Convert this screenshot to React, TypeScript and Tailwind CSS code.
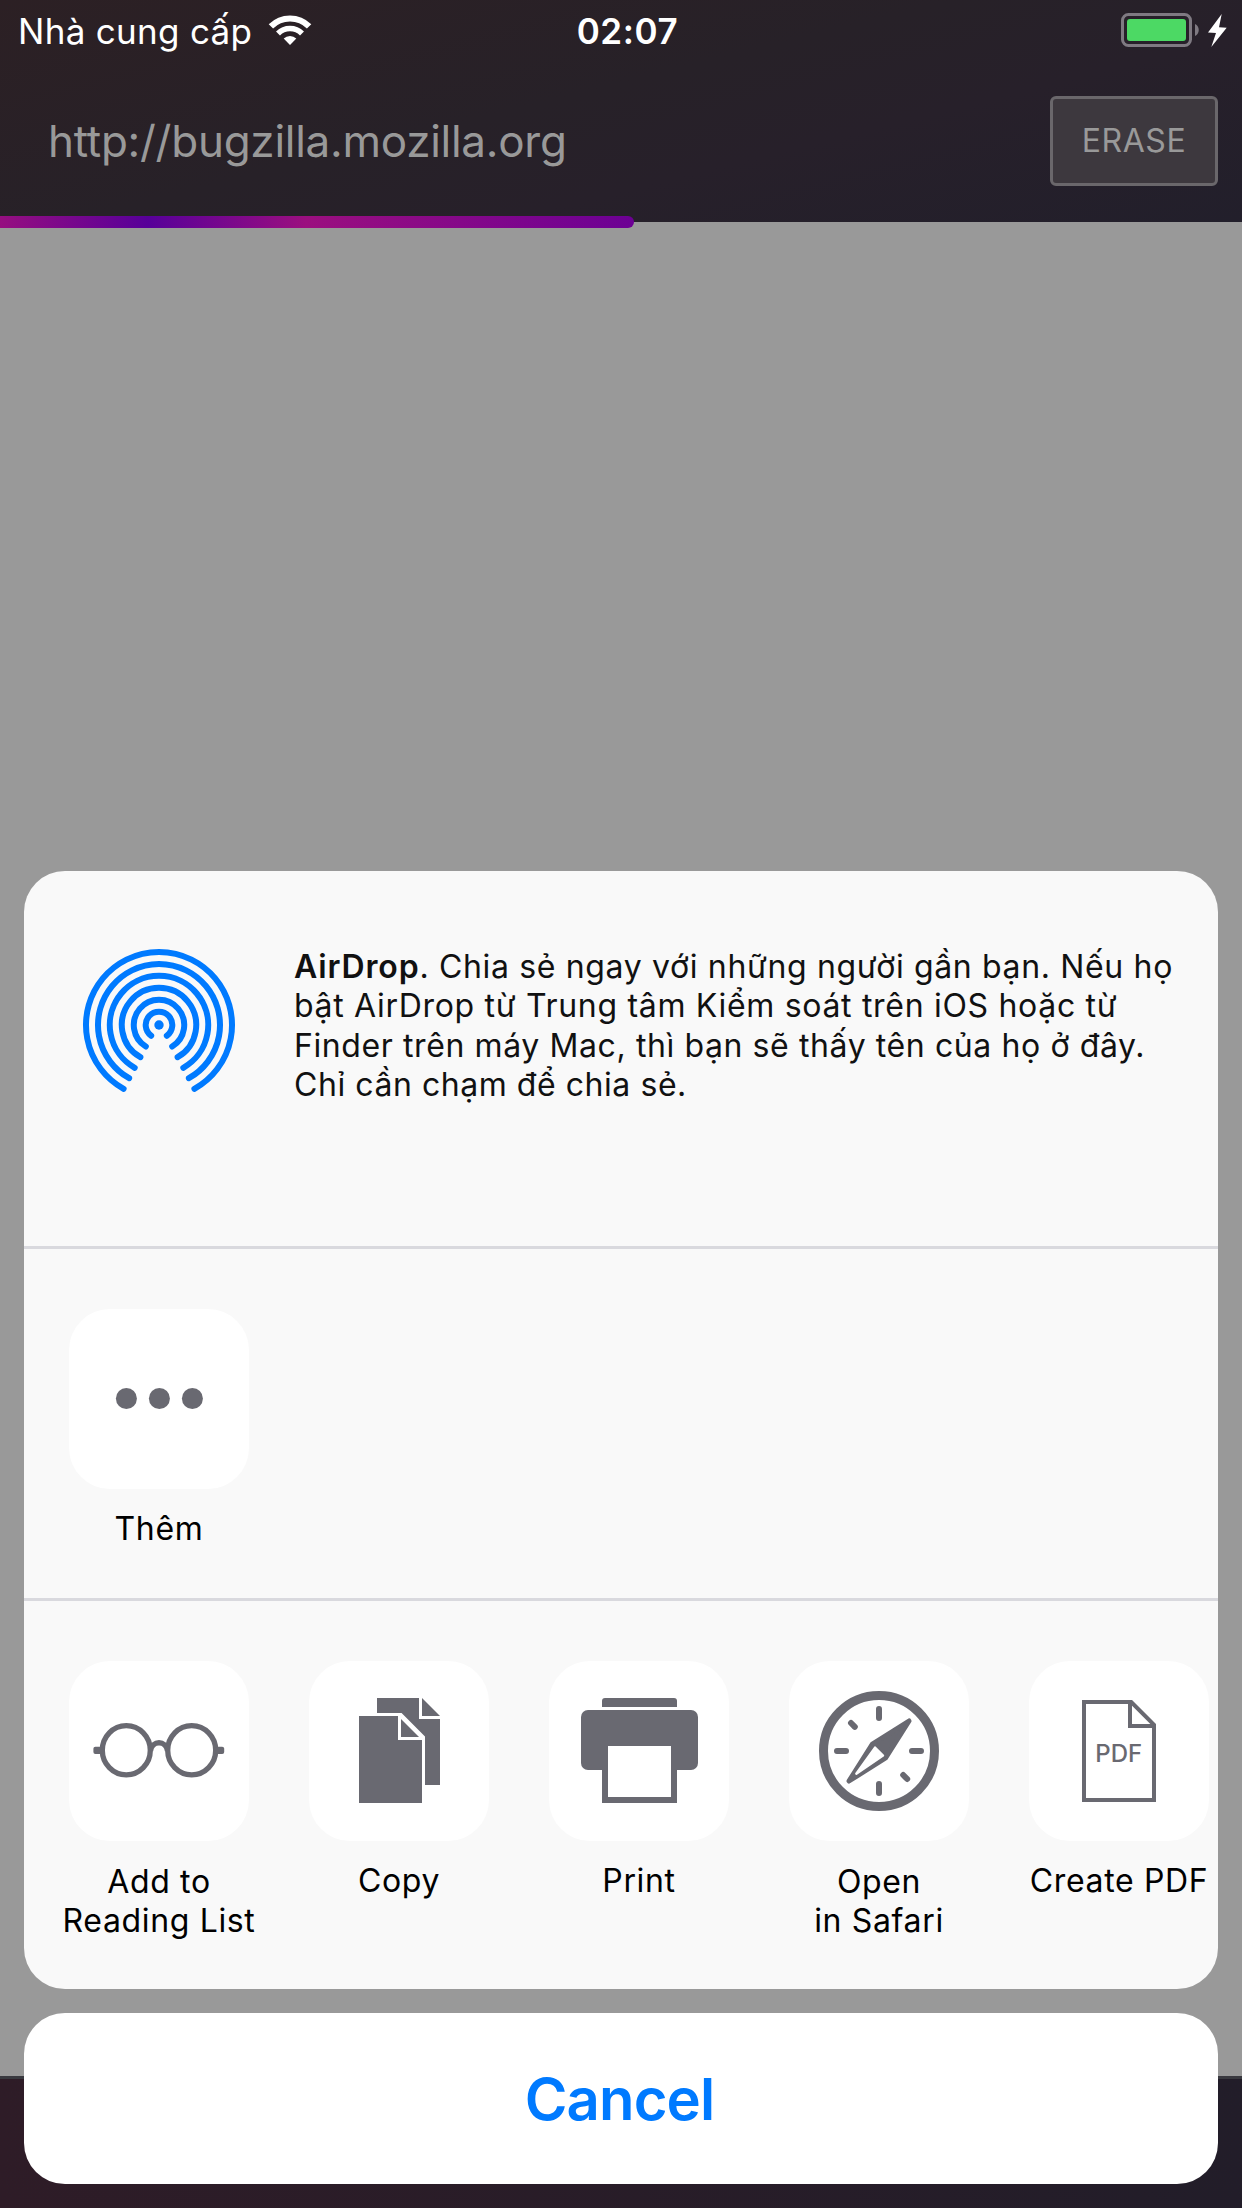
import type { ReactNode } from "react";

const GLYPH = "#696971";

function WifiIcon() {
  return (
    <svg width="44" height="32" viewBox="0 0 44 32" fill="none" stroke="#fff">
      <path d="M2.9 12.4A27 27 0 0 1 41.1 12.4" strokeWidth="6.2" />
      <path d="M10 19.5A17 17 0 0 1 34 19.5" strokeWidth="5.6" />
      <path d="M22 31L15.7 24.6A9 9 0 0 1 28.3 24.6Z" fill="#fff" stroke="none" />
    </svg>
  );
}

function BatteryIcon() {
  return (
    <svg width="108" height="36" viewBox="0 0 108 36">
      <rect x="1.5" y="2.5" width="68" height="31" rx="6" fill="none" stroke="#7f7a82" strokeWidth="3" />
      <rect x="6" y="7" width="59" height="22" rx="3" fill="#4cd964" />
      <path d="M74 12C79 14 79 22 74 24Z" fill="#7f7a82" />
      <path d="M100.7 2L87 20.6L95 21L90.3 35L105.7 15.7L98 15.2Z" fill="#fff" />
    </svg>
  );
}

function AirDropIcon() {
  const rings = [
    { r: 73, a: 29 },
    { r: 61, a: 29.3 },
    { r: 49.2, a: 29.6 },
    { r: 37.2, a: 30 },
    { r: 25.2, a: 31.5 },
    { r: 13.3, a: 36 },
  ];
  return (
    <svg width="160" height="160" viewBox="-80 -80 160 160" fill="none" stroke="#007aff" strokeWidth="6" strokeLinecap="round">
      {rings.map(({ r, a }) => {
        const x = r * Math.sin((a * Math.PI) / 180);
        const y = r * Math.cos((a * Math.PI) / 180);
        return <path key={r} d={`M${-x} ${y}A${r} ${r} 0 1 1 ${x} ${y}`} />;
      })}
      <circle r="4.7" fill="#007aff" stroke="none" />
    </svg>
  );
}

function Tile({ label, children }: { label: string[]; children: ReactNode }) {
  return (
    <div className="flex w-60 shrink-0 flex-col items-center">
      <div className="size-[180px] rounded-[41px] bg-white">
        <svg width="180" height="180" viewBox="0 0 180 180" fill={GLYPH}>
          {children}
        </svg>
      </div>
      <div
        className={
          (label.length > 1 ? "mt-[21px]" : "mt-5") +
          " text-center text-[32px] leading-[39.33px] tracking-[0.65px] whitespace-nowrap text-black"
        }
      >
        {label.map((line) => (
          <div key={line}>{line}</div>
        ))}
      </div>
    </div>
  );
}

function MoreGlyph() {
  return (
    <>
      <circle cx="57.4" cy="89.5" r="10.5" />
      <circle cx="90.4" cy="89.5" r="10.5" />
      <circle cx="123.4" cy="89.5" r="10.5" />
    </>
  );
}

function GlassesGlyph() {
  return (
    <>
      <g fill="none" stroke={GLYPH} strokeWidth="5.3">
        <ellipse cx="57.3" cy="89.3" rx="24" ry="24.6" />
        <ellipse cx="122.7" cy="89.3" rx="24" ry="24.6" />
        <path d="M81.5 90C83 79 97 79 98.5 90" />
      </g>
      <rect x="24.4" y="85.7" width="9" height="7.4" rx="2" />
      <rect x="146.6" y="85.7" width="8.6" height="7.4" rx="2" />
    </>
  );
}

function CopyGlyph() {
  return (
    <>
      <path d="M50 55H89V79H113V142H50Z" />
      <path d="M92 58V76H110Z" />
      <path d="M68 37H110V58H131V124H116V75.6L92.6 52H68Z" />
      <path d="M113 37V55H131Z" />
    </>
  );
}

function PrintGlyph() {
  return (
    <>
      <path d="M53 46V40Q53 37 56 37H125Q128 37 128 40V46Z" />
      <rect x="32" y="49" width="117" height="60" rx="7" />
      <rect x="53" y="100" width="75" height="42" />
      <rect x="59" y="85" width="63" height="51" fill="#fff" />
    </>
  );
}

function CompassGlyph() {
  return (
    <>
      <circle cx="90" cy="90" r="55.5" fill="none" stroke={GLYPH} strokeWidth="9" />
      <path
        d="M90 48V57M90 123V132M48 90H57M123 90H132M62 62L65.8 65.8M114.2 114L118.2 118"
        stroke={GLYPH}
        strokeWidth="6"
        strokeLinecap="round"
      />
      <path d="M120 60L96.6 97L60 120L83.4 83Z" stroke={GLYPH} strokeWidth="5" strokeLinejoin="round" />
      <path d="M86 86.6L94 94.6L67.3 112.7Z" fill="#fff" stroke="#fff" strokeWidth="2.4" strokeLinejoin="round" />
    </>
  );
}

function PdfGlyph() {
  return (
    <>
      <path d="M55 41H102.2L125 63.8V139H55ZM101 41V65H125" fill="none" stroke={GLYPH} strokeWidth="4" />
      <text x="66.3" y="100.5" fontSize="24" fontWeight="500">
        PDF
      </text>
    </>
  );
}

export default function App() {
  return (
    <div className="relative flex h-[2208px] w-[1242px] flex-col overflow-hidden bg-[#999] font-['Inter','Noto_Sans',sans-serif]">
      <header className="relative h-[222px] shrink-0 bg-[linear-gradient(166deg,#2c2024_0%,#272128_45%,#27202a_65%,#221f2b_100%)]">
        <div className="grid h-[63px] grid-cols-[1fr_auto_1fr] items-center text-[35px] leading-[63px] text-white">
          <div className="flex items-center pl-[18px]">
            <span className="tracking-[0.3px]">Nhà cung cấp</span>
            <span className="-mt-[3px] ml-4">
              <WifiIcon />
            </span>
          </div>
          <span className="pl-[13px] font-semibold tracking-[0.6px]">02:07</span>
          <div className="-mt-[3px] flex justify-end pr-[13px]">
            <BatteryIcon />
          </div>
        </div>
        <div className="flex h-[156px] items-center justify-between pr-6 pl-12 text-[#999]">
          <span className="text-[44px] leading-[156px] tracking-[-0.265px]">http://bugzilla.mozilla.org</span>
          <button className="h-[90px] w-[168px] rounded-md border-3 border-[#6a676b] bg-[#3d383e] text-[32px] tracking-[0.55px]">
            ERASE
          </button>
        </div>
        <div className="absolute top-[216px] left-0 h-3 w-[634px] rounded-r-full bg-[linear-gradient(90deg,#960f80_0px,#570099_148px,#9b0f7f_306px,#6c0094_634px)]" />
      </header>

      <main className="grow" />

      <footer className="h-[132px] shrink-0 border-t-3 border-[#39393f] bg-linear-to-r from-[#2e1c27] to-[#221d29]" />

      <div className="absolute inset-x-6 bottom-6 flex flex-col gap-6">
        <div className="overflow-hidden rounded-[41px] bg-[#f9f9f9]">
          <section className="flex h-[378px] border-b-3 border-[#d9d9de] pl-[55px]">
            <div className="mt-[74px] size-40 shrink-0">
              <AirDropIcon />
            </div>
            <div className="mt-[76px] ml-[55px] text-[32px] leading-[39.33px] tracking-[0.65px] whitespace-nowrap text-[#111]">
              <div>
                <b className="font-semibold tracking-[0.85px]">AirDrop</b>. Chia sẻ ngay với những người gần bạn. Nếu họ
              </div>
              <div className="tracking-[0.69px]">bật AirDrop từ Trung tâm Kiểm soát trên iOS hoặc từ</div>
              <div className="tracking-[0.6px]">Finder trên máy Mac, thì bạn sẽ thấy tên của họ ở đây.</div>
              <div className="tracking-[0.55px]">Chỉ cần chạm để chia sẻ.</div>
            </div>
          </section>
          <section className="flex h-[352px] border-b-3 border-[#d9d9de] pt-[60px] pl-[15px]">
            <Tile label={["Thêm"]}>
              <MoreGlyph />
            </Tile>
          </section>
          <section className="flex h-[388px] pt-[60px] pl-[15px]">
            <Tile label={["Add to", "Reading List"]}>
              <GlassesGlyph />
            </Tile>
            <Tile label={["Copy"]}>
              <CopyGlyph />
            </Tile>
            <Tile label={["Print"]}>
              <PrintGlyph />
            </Tile>
            <Tile label={["Open", "in Safari"]}>
              <CompassGlyph />
            </Tile>
            <Tile label={["Create PDF"]}>
              <PdfGlyph />
            </Tile>
          </section>
        </div>
        <button className="h-[171px] rounded-[41px] bg-white pt-px pr-[3px] text-[58px] leading-[170px] font-semibold tracking-[-0.84px] text-[#007aff]">
          Cancel
        </button>
      </div>
    </div>
  );
}
